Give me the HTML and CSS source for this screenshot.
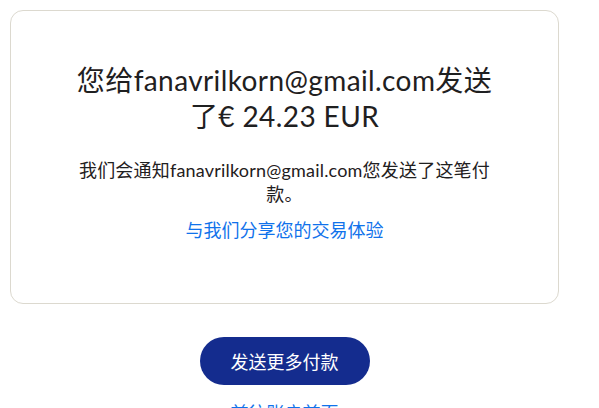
FILE: index.html
```html
<!DOCTYPE html>
<html lang="zh-CN">
<head>
  <meta charset="UTF-8">
  <meta name="viewport" content="width=device-width, initial-scale=1.0">
  <title>付款已发送</title>
  <link rel="stylesheet" href="styles.css">
</head>
<body>
  <div class="page">
    <div class="card">
      <div class="card-body">
        <h1 class="title">您给fanavrilkorn@gmail.com发送了€ 24.23 EUR</h1>
        <p class="note">我们会通知fanavrilkorn@gmail.com您发送了这笔付款。</p>
        <a class="link" href="#">与我们分享您的交易体验</a>
      </div>
    </div>

    <div class="actions">
      <button class="btn">发送更多付款</button>
      <a class="link" href="#">前往账户首页</a>
    </div>
  </div>
</body>
</html>
```

FILE: styles.css
```css
body { margin: 0; background: #fff; color: #1f2021; font-family: Lato, "Noto Sans CJK SC", sans-serif; }
.page { width: 549px; padding: 10px; }
.card { border: 1px solid #dcd9cf; border-radius: 13px; padding: 51px 0 61px; }
.card-body { width: 430px; margin: 0 auto; text-align: center; }
.title { margin: 0; font-size: 28px; line-height: 36px; font-weight: 400; letter-spacing: 0.4px; }
.note { margin: 24px 0 0; font-size: 18px; line-height: 24px; letter-spacing: 0.2px; }
.link { display: block; margin-top: 12px; font-size: 18px; line-height: 24px; color: #1072eb; text-decoration: none; }
.actions { display: flex; flex-direction: column; align-items: center; margin-top: 33px; }
.btn { height: 48px; padding: 0 31px; border: none; border-radius: 24px; background: #142c8e; color: #fff; font-family: inherit; font-size: 18px; cursor: pointer; }
.actions .link { margin-top: 16px; }
```
